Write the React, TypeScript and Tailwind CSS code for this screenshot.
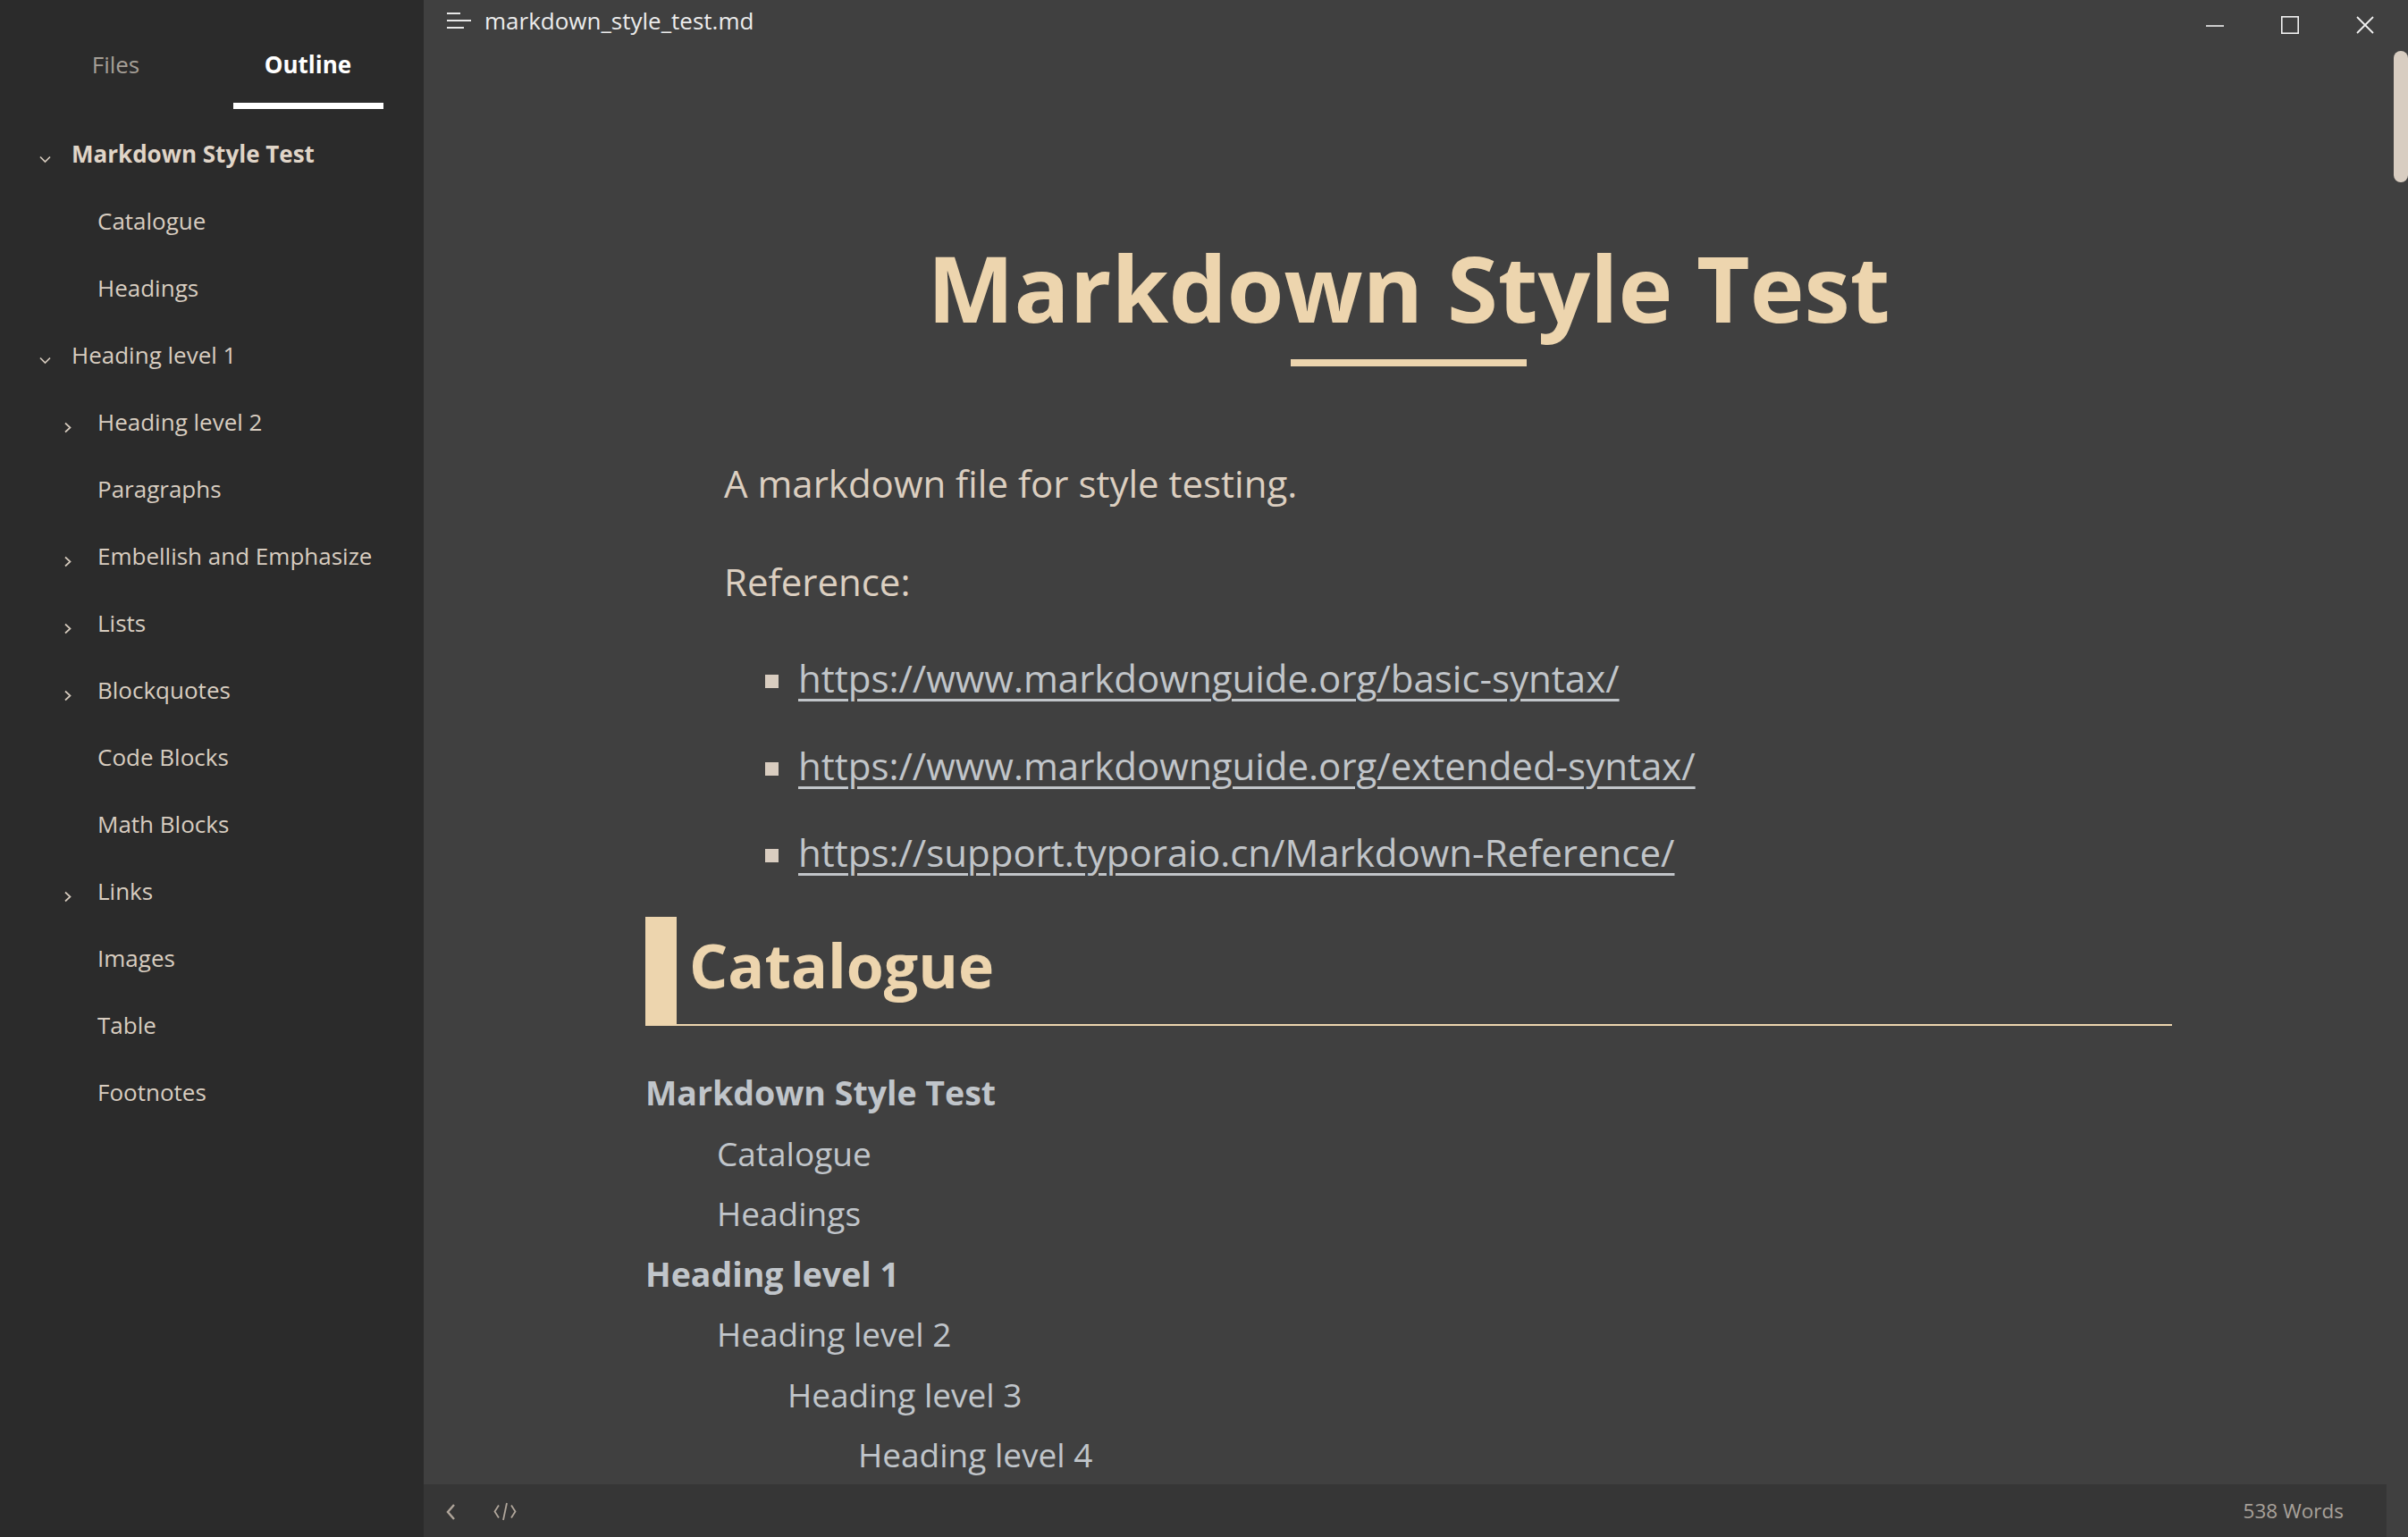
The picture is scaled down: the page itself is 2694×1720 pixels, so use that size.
import React from "react";

type OutlineItem = {
  title: string;
  level: 1 | 2;
  toggle?: "open" | "closed";
  bold?: boolean;
};

const outline: OutlineItem[] = [
  { title: "Markdown Style Test", level: 1, toggle: "open", bold: true },
  { title: "Catalogue", level: 2 },
  { title: "Headings", level: 2 },
  { title: "Heading level 1", level: 1, toggle: "open" },
  { title: "Heading level 2", level: 2, toggle: "closed" },
  { title: "Paragraphs", level: 2 },
  { title: "Embellish and Emphasize", level: 2, toggle: "closed" },
  { title: "Lists", level: 2, toggle: "closed" },
  { title: "Blockquotes", level: 2, toggle: "closed" },
  { title: "Code Blocks", level: 2 },
  { title: "Math Blocks", level: 2 },
  { title: "Links", level: 2, toggle: "closed" },
  { title: "Images", level: 2 },
  { title: "Table", level: 2 },
  { title: "Footnotes", level: 2 },
];

const links = [
  "https://www.markdownguide.org/basic-syntax/",
  "https://www.markdownguide.org/extended-syntax/",
  "https://support.typoraio.cn/Markdown-Reference/",
];

// table of contents rendered inside the document
const toc: { title: string; depth: number; bold?: boolean }[] = [
  { title: "Markdown Style Test", depth: 0, bold: true },
  { title: "Catalogue", depth: 1 },
  { title: "Headings", depth: 1 },
  { title: "Heading level 1", depth: 0, bold: true },
  { title: "Heading level 2", depth: 1 },
  { title: "Heading level 3", depth: 2 },
  { title: "Heading level 4", depth: 3 },
];

const tocIndent = ["pl-0", "pl-[80px]", "pl-[159px]", "pl-[238px]"];

function ChevronDown() {
  return (
    <svg width="15" height="10" viewBox="0 0 15 10" className="mt-[11px]">
      <polyline points="2,2.5 7.5,8 13,2.5" fill="none" stroke="#d5cabd" strokeWidth="1.7" />
    </svg>
  );
}

function ChevronRight() {
  return (
    <svg width="9" height="13" viewBox="0 0 9 13" className="mt-[12px]">
      <polyline points="2,1.5 7.5,6.5 2,11.5" fill="none" stroke="#d5cabd" strokeWidth="1.7" />
    </svg>
  );
}

function Sidebar() {
  return (
    <aside className="w-[474px] shrink-0 h-full bg-[#2b2b2b] flex flex-col">
      <div className="flex px-[22px] pt-[54px]">
        <div className="w-[215px] flex flex-col items-center">
          <span className="text-[26px] leading-[36px] text-[#a59e96]">Files</span>
          <div className="mt-[25px] h-[7px] w-[168px]" />
        </div>
        <div className="w-[215px] flex flex-col items-center">
          <span className="text-[26px] leading-[36px] font-bold text-white">Outline</span>
          <div className="mt-[25px] h-[7px] w-[168px] bg-white" />
        </div>
      </div>
      <ul className="mt-[13px]">
        {outline.map((item) => (
          <li
            key={item.title}
            className={
              "flex items-center h-[75px] text-[26px] leading-[75px] text-[#d8cdc0] " +
              (item.level === 1 ? "pl-[43px]" : "pl-[71px]")
            }
          >
            <span className={"flex items-center " + (item.level === 1 ? "w-[37px]" : "w-[38px]")}>
              {item.toggle === "open" && <ChevronDown />}
              {item.toggle === "closed" && <ChevronRight />}
            </span>
            <span className={item.bold ? "font-bold text-[#e0d5c8]" : ""}>{item.title}</span>
          </li>
        ))}
      </ul>
    </aside>
  );
}

function TitleBar() {
  return (
    <div className="flex h-[56px] shrink-0 justify-between">
      <div className="flex items-center h-[46px] pl-[25px]">
        <svg width="28" height="18" viewBox="0 0 28 18">
          <g stroke="#e8e8e8" strokeWidth="2">
            <line x1="1" y1="1" x2="16" y2="1" />
            <line x1="1" y1="9" x2="28" y2="9" />
            <line x1="1" y1="17" x2="20" y2="17" />
          </g>
        </svg>
        <span className="ml-[15px] text-[26px] leading-[36px] text-[#ececec]">markdown_style_test.md</span>
      </div>
      <div className="flex mr-[6px]">
        <div className="w-[84px] h-[56px] flex items-center justify-center">
          <svg width="20" height="20" viewBox="0 0 20 20">
            <line x1="0" y1="11" x2="20" y2="11" stroke="#f2f2f2" strokeWidth="1.6" />
          </svg>
        </div>
        <div className="w-[84px] h-[56px] flex items-center justify-center">
          <svg width="20" height="20" viewBox="0 0 20 20">
            <rect x="0.8" y="0.8" width="18.4" height="18.4" fill="none" stroke="#f2f2f2" strokeWidth="1.6" />
          </svg>
        </div>
        <div className="w-[84px] h-[56px] flex items-center justify-center">
          <svg width="20" height="20" viewBox="0 0 20 20">
            <g stroke="#f2f2f2" strokeWidth="1.8">
              <line x1="1" y1="1" x2="19" y2="19" />
              <line x1="19" y1="1" x2="1" y2="19" />
            </g>
          </svg>
        </div>
      </div>
    </div>
  );
}

function Document() {
  return (
    <div className="flex-1 overflow-hidden">
      <div className="ml-[248px] w-[1708px]">
        <h1 className="mt-[204px] text-center text-[103px] leading-[122px] font-bold text-[#edd5ae]">
          Markdown Style Test
        </h1>
        <div className="mx-auto mt-[20px] h-[8px] w-[264px] bg-[#edd5ae]" />

        <p className="mt-[101px] pl-[88px] text-[42px] leading-[60px] text-[#dccfc0]">
          A markdown file for style testing.
        </p>
        <p className="mt-[50px] pl-[88px] text-[42px] leading-[60px] text-[#dccfc0]">Reference:</p>

        <ul className="mt-[48px] pl-[134px] flex flex-col gap-[37.5px]">
          {links.map((href) => (
            <li key={href} className="flex items-start">
              <span className="mt-[26px] h-[15px] w-[15px] shrink-0 bg-[#d9cdc0]" />
              <a
                href="#"
                className="ml-[22px] text-[42px] leading-[60px] text-[#c1c5c9] underline decoration-[2.5px] underline-offset-[7px]"
              >
                {href}
              </a>
            </li>
          ))}
        </ul>

        <h2 className="mt-[42px] border-l-[35px] border-b-2 border-[#edd5ae] pl-[14px] pt-[13px] pb-[25px] text-[68px] leading-[82px] font-bold text-[#edd5ae]">
          Catalogue
        </h2>

        <div className="mt-[41px] text-[#c0c5ca]">
          {toc.map((entry) => (
            <div
              key={entry.title}
              className={
                "h-[67.5px] leading-[67.5px] " +
                tocIndent[entry.depth] +
                (entry.bold ? " text-[37.5px] font-bold" : " text-[37px]")
              }
            >
              {entry.title}
            </div>
          ))}
        </div>
      </div>
    </div>
  );
}

function StatusBar() {
  return (
    <div className="flex h-[59px] shrink-0 items-center mr-[24px] bg-[#363636]">
      <svg width="12" height="20" viewBox="0 0 12 20" className="ml-[24px] mt-[3px]">
        <polyline points="10,2 3,10 10,18" fill="none" stroke="#b0a69b" strokeWidth="2.4" />
      </svg>
      <svg width="28" height="21" viewBox="0 0 28 21" className="ml-[41px] mt-[1px]">
        <g fill="none" stroke="#b0a69b" strokeWidth="1.8">
          <polyline points="7,3.5 2.5,10.5 7,17.5" />
          <line x1="16" y1="1" x2="12" y2="20" />
          <polyline points="21,3.5 25.5,10.5 21,17.5" />
        </g>
      </svg>
      <span className="ml-auto mr-[48px] text-[22.5px] leading-[59px] text-[#a8a19a]">538 Words</span>
    </div>
  );
}

export default function App() {
  return (
    <div className="flex w-[2694px] h-[1720px] overflow-hidden font-['Open_Sans',sans-serif]">
      <Sidebar />
      <main className="relative flex flex-1 flex-col bg-[#404040]">
        <TitleBar />
        <Document />
        <StatusBar />
        <div className="absolute right-0 top-[57px] h-[147px] w-[16px] rounded-[8px] bg-[#d8cdc1]" />
      </main>
    </div>
  );
}
